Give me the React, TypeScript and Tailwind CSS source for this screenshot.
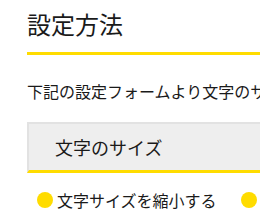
export default function App() {
  const items = ['文字サイズを縮小する', '文字サイズを拡大する'];

  return (
    <div className="w-[260px] h-[220px] overflow-hidden bg-white text-[#1a1a1a] [font-family:'Noto_Sans_CJK_JP','Noto_Sans',sans-serif]">
      <div className="pl-[27px] w-[600px]">
        <h2 className="mt-[6px] pb-[10px] text-[24px] leading-[36px] font-normal border-b-[3px] border-[#ffdc00]">
          設定方法
        </h2>

        <p className="mt-[24px] text-[16px] leading-[24px] whitespace-nowrap">
          下記の設定フォームより文字のサイズを変更できます。
        </p>

        <div className="mt-[19px] h-[51px] flex items-center bg-[#eeeeee] border-t-2 border-l-2 border-[#e2e2e2] border-b-[3px] border-b-[#ffdc00] pl-[26px]">
          <span className="text-[18px] leading-[24px]">文字のサイズ</span>
        </div>

        <ul className="mt-[15px] ml-[10px] flex gap-[24px] whitespace-nowrap">
          {items.map((label) => (
            <li key={label} className="flex items-center gap-[4px] text-[16px] leading-[24px]">
              <span className="w-[16px] h-[16px] rounded-full bg-[#ffdc00] shrink-0" />
              {label}
            </li>
          ))}
        </ul>
      </div>
    </div>
  );
}
